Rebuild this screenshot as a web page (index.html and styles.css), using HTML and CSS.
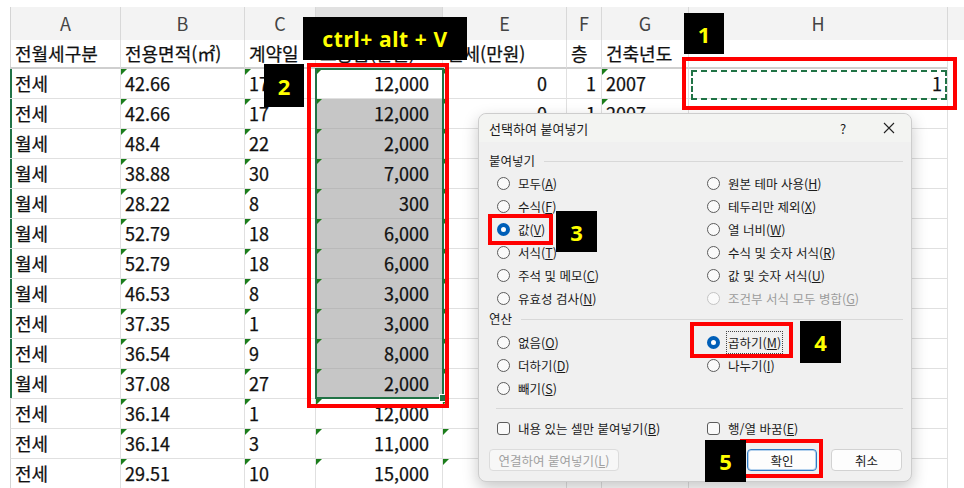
FILE: index.html
```html
<!DOCTYPE html>
<html lang="ko">
<head>
  <meta charset="UTF-8" />
  <title>선택하여 붙여넣기</title>
  <link rel="stylesheet" href="styles.css">
</head>
<body>
  <div class="screen">
    <div class="sheet">
      <div class="row head">
        <div class="cell">A</div><div class="cell">B</div><div class="cell">C</div><div class="cell col-on">D</div>
        <div class="cell">E</div><div class="cell">F</div><div class="cell">G</div><div class="cell">H</div>
      </div>
      <div class="row titles">
        <div class="cell">전월세구분</div><div class="cell">전용면적(㎡)</div><div class="cell">계약일</div><div class="cell">보증금(만원)</div>
        <div class="cell">월세(만원)</div><div class="cell">층</div><div class="cell">건축년도</div><div class="cell"></div>
      </div>

      <div class="row sel">
        <div class="cell">전세</div><div class="cell t">42.66</div><div class="cell t">17</div><div class="cell t num">12,000</div>
        <div class="cell t num e">0</div><div class="cell num f">1</div><div class="cell t">2007</div><div class="cell num h">1</div>
      </div>
      <div class="row sel">
        <div class="cell">전세</div><div class="cell t">42.66</div><div class="cell t">17</div><div class="cell t num gray">12,000</div>
        <div class="cell t num e">0</div><div class="cell num f">1</div><div class="cell t">2007</div><div class="cell"></div>
      </div>
      <div class="row sel">
        <div class="cell">월세</div><div class="cell t">48.4</div><div class="cell t">22</div><div class="cell t num gray">2,000</div>
        <div class="cell t"></div><div class="cell"></div><div class="cell t"></div><div class="cell"></div>
      </div>
      <div class="row sel">
        <div class="cell">월세</div><div class="cell t">38.88</div><div class="cell t">30</div><div class="cell t num gray">7,000</div>
        <div class="cell t"></div><div class="cell"></div><div class="cell t"></div><div class="cell"></div>
      </div>
      <div class="row sel">
        <div class="cell">월세</div><div class="cell t">28.22</div><div class="cell t">8</div><div class="cell t num gray">300</div>
        <div class="cell t"></div><div class="cell"></div><div class="cell t"></div><div class="cell"></div>
      </div>
      <div class="row sel">
        <div class="cell">월세</div><div class="cell t">52.79</div><div class="cell t">18</div><div class="cell t num gray">6,000</div>
        <div class="cell t"></div><div class="cell"></div><div class="cell t"></div><div class="cell"></div>
      </div>
      <div class="row sel">
        <div class="cell">월세</div><div class="cell t">52.79</div><div class="cell t">18</div><div class="cell t num gray">6,000</div>
        <div class="cell t"></div><div class="cell"></div><div class="cell t"></div><div class="cell"></div>
      </div>
      <div class="row sel">
        <div class="cell">월세</div><div class="cell t">46.53</div><div class="cell t">8</div><div class="cell t num gray">3,000</div>
        <div class="cell t"></div><div class="cell"></div><div class="cell t"></div><div class="cell"></div>
      </div>
      <div class="row sel">
        <div class="cell">전세</div><div class="cell t">37.35</div><div class="cell t">1</div><div class="cell t num gray">3,000</div>
        <div class="cell t"></div><div class="cell"></div><div class="cell t"></div><div class="cell"></div>
      </div>
      <div class="row sel">
        <div class="cell">전세</div><div class="cell t">36.54</div><div class="cell t">9</div><div class="cell t num gray">8,000</div>
        <div class="cell t"></div><div class="cell"></div><div class="cell t"></div><div class="cell"></div>
      </div>
      <div class="row sel">
        <div class="cell">월세</div><div class="cell t">37.08</div><div class="cell t">27</div><div class="cell t num gray">2,000</div>
        <div class="cell t"></div><div class="cell"></div><div class="cell t"></div><div class="cell"></div>
      </div>
      <div class="row">
        <div class="cell">전세</div><div class="cell t">36.14</div><div class="cell t">1</div><div class="cell t num">12,000</div>
        <div class="cell t"></div><div class="cell"></div><div class="cell t"></div><div class="cell"></div>
      </div>
      <div class="row">
        <div class="cell">전세</div><div class="cell t">36.14</div><div class="cell t">3</div><div class="cell t num">11,000</div>
        <div class="cell t"></div><div class="cell"></div><div class="cell t"></div><div class="cell"></div>
      </div>
      <div class="row">
        <div class="cell">전세</div><div class="cell t">29.51</div><div class="cell t">10</div><div class="cell t num">15,000</div>
        <div class="cell t"></div><div class="cell"></div><div class="cell t"></div><div class="cell"></div>
      </div>
    </div>

    <!-- selection + copy marquee -->
    <div class="range-sel"></div>
    <div class="copy-ants"></div>

    <div class="dialog">
      <div class="dlg-title">
        <span class="dlg-name">선택하여 붙여넣기</span>
        <span class="dlg-help">?</span>
        <svg class="dlg-close" width="12" height="12" viewBox="0 0 12 12">
          <path d="M1 1 L11 11 M11 1 L1 11" stroke="#222" stroke-width="1.1" fill="none"/>
        </svg>
      </div>

      <div class="dlg-body">
        <div class="grp first"><span>붙여넣기</span><i></i></div>
        <div class="opts">
          <div class="opt"><b class="radio"></b>모두(<u>A</u>)</div>
          <div class="opt"><b class="radio"></b>원본 테마 사용(<u>H</u>)</div>
          <div class="opt"><b class="radio"></b>수식(<u>F</u>)</div>
          <div class="opt"><b class="radio"></b>테두리만 제외(<u>X</u>)</div>
          <div class="opt"><b class="radio on"></b>값(<u>V</u>)</div>
          <div class="opt"><b class="radio"></b>열 너비(<u>W</u>)</div>
          <div class="opt"><b class="radio"></b>서식(<u>T</u>)</div>
          <div class="opt"><b class="radio"></b>수식 및 숫자 서식(<u>R</u>)</div>
          <div class="opt"><b class="radio"></b>주석 및 메모(<u>C</u>)</div>
          <div class="opt"><b class="radio"></b>값 및 숫자 서식(<u>U</u>)</div>
          <div class="opt"><b class="radio"></b>유효성 검사(<u>N</u>)</div>
          <div class="opt off"><b class="radio"></b>조건부 서식 모두 병합(<u>G</u>)</div>
        </div>

        <div class="grp"><span>연산</span><i></i></div>
        <div class="opts ops">
          <div class="opt"><b class="radio"></b>없음(<u>O</u>)</div>
          <div class="opt"><b class="radio on"></b><span class="focus">곱하기(<u>M</u>)</span></div>
          <div class="opt"><b class="radio"></b>더하기(<u>D</u>)</div>
          <div class="opt"><b class="radio"></b>나누기(<u>I</u>)</div>
          <div class="opt"><b class="radio"></b>빼기(<u>S</u>)</div>
          <div class="opt"></div>
        </div>

        <div class="sep"></div>

        <div class="opts checks">
          <div class="opt"><b class="check"></b>내용 있는 셀만 붙여넣기(<u>B</u>)</div>
          <div class="opt"><b class="check"></b>행/열 바꿈(<u>E</u>)</div>
        </div>

        <div class="buttons">
          <div class="btn disabled">연결하여 붙여넣기(<u>L</u>)</div>
          <div class="btn primary">확인</div>
          <div class="btn">취소</div>
        </div>
      </div>
    </div>

    <!-- annotations -->
    <div class="tag keys">ctrl+ alt + V</div>
    <div class="tag n1">1</div>
    <div class="redbox r1"></div>
    <div class="tag n2">2</div>
    <div class="redbox r2"></div>
    <div class="redbox r3"></div>
    <div class="tag n3">3</div>
    <div class="redbox r4"></div>
    <div class="tag n4">4</div>
    <div class="redbox r5"></div>
    <div class="tag n5">5</div>
  </div>
</body>
</html>
```

FILE: styles.css
```css
body {
  margin: 0;
  background: #fff;
}

.screen {
  position: relative;
  width: 964px;
  height: 488px;
  overflow: hidden;
  background: #fff;
  font-family: "Noto Sans CJK KR", "Noto Sans", sans-serif;
}

/* ---------- sheet ---------- */

.sheet {
  padding: 7px 0 0 10px;
}

.row {
  display: grid;
  grid-template-columns: 111px 124px 71px 127px 124px 35px 87px 259px;
  height: 30px;
}

.cell {
  position: relative;
  box-sizing: border-box;
  border-right: 1px solid #e0e0e0;
  border-bottom: 1px solid #e0e0e0;
  padding: 0 4px;
  font-size: 18px;
  line-height: 29px;
  color: #111;
  -webkit-text-stroke: 0.25px #111;
  white-space: nowrap;
  overflow: hidden;
}

.row .cell:first-child {
  border-left: 1px solid #d4d4d4;
  padding-left: 4px;
}

.row.sel .cell:first-child {
  border-left: none;
  box-shadow: inset 2px 0 #217346;
  padding-left: 5px;
}

.head {
  height: 33px;
  background: #f3f3f3;
}

.head .cell {
  text-align: center;
  color: #444;
  -webkit-text-stroke: 0;
  line-height: 33px;
  border-right-color: #d8d8d8;
  border-bottom: none;
}

.head .col-on {
  background: #e1e1e1;
}

.titles {
  height: 29px;
}

.titles .cell {
  line-height: 27px;
  border-bottom: 2px solid #cfcfcf;
}

.num {
  text-align: right;
  padding-right: 13px;
}

.num.e {
  padding-right: 19px;
}

.num.f {
  padding-right: 5px;
}

.num.h {
  padding-right: 5px;
}

.gray {
  background: #c6c6c6;
  border-bottom-color: #b9b9b9;
}

.t::before {
  content: '';
  position: absolute;
  left: 0;
  top: 0;
  border-top: 6px solid #1b7d1b;
  border-right: 6px solid transparent;
}

.range-sel {
  position: absolute;
  left: 315px;
  top: 68px;
  width: 129px;
  height: 331px;
  box-sizing: border-box;
  border: 2px solid #217346;
}

.range-sel::after {
  content: '';
  position: absolute;
  right: -5px;
  bottom: -5px;
  width: 6px;
  height: 6px;
  background: #217346;
  border: 1px solid #fff;
}

.copy-ants {
  position: absolute;
  left: 691px;
  top: 70px;
  width: 256px;
  height: 30px;
  box-sizing: border-box;
  border: 2px dashed #217346;
}

/* ---------- dialog ---------- */

.dialog {
  position: absolute;
  left: 478px;
  top: 113px;
  width: 434px;
  height: 369px;
  box-sizing: border-box;
  background: #f0f0f0;
  border: 1px solid #cdcdcd;
  border-radius: 8px;
  box-shadow: 0 6px 16px rgba(0, 0, 0, 0.22);
  font-size: 12.5px;
  color: #1b1b1b;
}

.dlg-title {
  display: flex;
  align-items: center;
  height: 28px;
  padding: 0 16px 0 10px;
  background: #f3f4f2;
  border-radius: 8px 8px 0 0;
  font-size: 13px;
}

.dlg-name {
  flex: 1;
}

.dlg-help {
  width: 12px;
  text-align: center;
  margin-right: 34px;
  font-size: 13px;
}

.dlg-body {
  padding: 0 8px 0 10px;
}

.grp {
  display: flex;
  align-items: center;
  height: 18px;
  line-height: 18px;
}

.grp.first {
  margin-top: 10px;
}

.grp i {
  flex: 1;
  height: 1px;
  margin-left: 9px;
  background: #d8d8d8;
}

.opts {
  display: grid;
  grid-template-columns: 210px 1fr;
  grid-auto-rows: 23px;
  margin-top: 2px;
}

.opts.ops {
  margin-top: 3px;
}

.opt {
  display: flex;
  align-items: center;
  padding-left: 8px;
  white-space: nowrap;
}

.opt.off {
  color: #9c9c9c;
}

.radio {
  flex-shrink: 0;
  width: 13px;
  height: 13px;
  box-sizing: border-box;
  margin-right: 8px;
  border: 1px solid #5c5c5c;
  border-radius: 50%;
  background: #fafafa;
}

.radio.on {
  border: 4px solid #005fb8;
  background: #fff;
}

.opt.off .radio {
  border-color: #c4c4c4;
}

.focus {
  outline: 1px dotted #444;
  outline-offset: 1px;
}

.sep {
  height: 1px;
  margin: 8px 0 0 7px;
  background: #d8d8d8;
}

.opts.checks {
  grid-auto-rows: 20px;
  margin-top: 9px;
}

.check {
  flex-shrink: 0;
  width: 13px;
  height: 13px;
  box-sizing: border-box;
  margin-right: 8px;
  border: 1px solid #5c5c5c;
  border-radius: 3px;
  background: #fafafa;
}

.buttons {
  display: flex;
  margin-top: 11px;
  padding-right: 1px;
}

.btn {
  display: flex;
  align-items: center;
  justify-content: center;
  height: 22px;
  box-sizing: border-box;
  border: 1px solid #d2d2d2;
  border-radius: 4px;
  background: #fdfdfd;
  width: 71px;
}

.btn.disabled {
  width: 130px;
  margin-right: auto;
  color: #a0a0a0;
  background: #f7f7f7;
  border-color: #dcdcdc;
}

.btn.primary {
  width: 70px;
  margin-right: 14px;
  border-color: #2f7cc6;
  box-shadow: inset 0 0 0 1px #b5d2ee;
}

/* ---------- annotations ---------- */

.tag {
  position: absolute;
  display: flex;
  align-items: center;
  justify-content: center;
  background: #000;
  color: #ffff00;
  font-family: "Noto Sans", sans-serif;
  font-weight: bold;
  font-size: 22px;
}

.keys {
  left: 303px;
  top: 17px;
  width: 164px;
  height: 43px;
  font-size: 21px;
  letter-spacing: 0.6px;
}

.n1 { left: 684px; top: 13px; width: 40px; height: 41px; }
.n2 { left: 264px; top: 64px; width: 40px; height: 43px; }
.n3 { left: 556px; top: 211px; width: 41px; height: 41px; }
.n4 { left: 800px; top: 321px; width: 41px; height: 42px; }
.n5 { left: 705px; top: 440px; width: 41px; height: 42px; }

.redbox {
  position: absolute;
  box-sizing: border-box;
  border: 4px solid #ff0000;
}

.r1 { left: 682px; top: 57px; width: 275px; height: 53px; }
.r2 { left: 307px; top: 63px; width: 142px; height: 345px; }
.r3 { left: 488px; top: 214px; width: 65px; height: 31px; }
.r4 { left: 690px; top: 322px; width: 103px; height: 36px; }
.r5 { left: 740px; top: 439px; width: 83px; height: 39px; }
```
